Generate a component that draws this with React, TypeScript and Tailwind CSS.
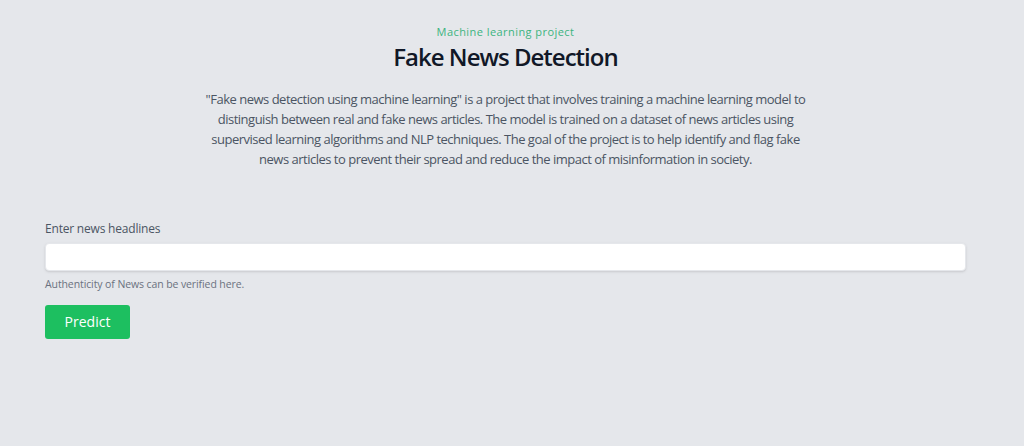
const lines = [
  '"Fake news detection using machine learning" is a project that involves training a machine learning model to',
  "distinguish between real and fake news articles. The model is trained on a dataset of news articles using",
  "supervised learning algorithms and NLP techniques. The goal of the project is to help identify and flag fake",
  "news articles to prevent their spread and reduce the impact of misinformation in society.",
];

export default function App() {
  return (
    <div className="min-h-screen bg-[#e5e7eb] font-['Open_Sans',sans-serif]">
      <div className="w-[1011px]">
        <section className="pt-[24px] text-center">
          <p className="text-[11px] font-medium tracking-[0.04em] text-[#3bb47f]">Machine learning project</p>
          <h1 className="text-[24px] font-semibold leading-[32px] tracking-[-1px] text-[#111827]">Fake News Detection</h1>
          <p className="mx-auto mt-[16px] max-w-[640px] text-[13px] leading-[20px] tracking-[-0.5px] text-[#4b5563]">
            {lines.map((line, i) => (
              <span key={i} className="block whitespace-nowrap">
                {line}
              </span>
            ))}
          </p>
        </section>

        <form className="mx-[45px] mt-[50px]" onSubmit={(e) => e.preventDefault()}>
          <label htmlFor="headline" className="block text-[12px] leading-[20px] tracking-[-0.2px] text-[#4b5563]">
            Enter news headlines
          </label>
          <input
            id="headline"
            type="text"
            className="mt-[4px] block h-[28px] w-full rounded-[4px] border border-[#e5e7eb] bg-white px-3 text-sm shadow-sm outline-none"
          />
          <p className="mt-[5px] text-[10.5px] leading-[16px] tracking-[-0.1px] text-[#6b7280]">
            Authenticity of News can be verified here.
          </p>
          <button
            type="submit"
            className="mt-[13px] h-[34px] w-[85px] rounded-[3px] bg-[#1dbf60] text-[14px] text-white"
          >
            Predict
          </button>
        </form>
      </div>
    </div>
  );
}
